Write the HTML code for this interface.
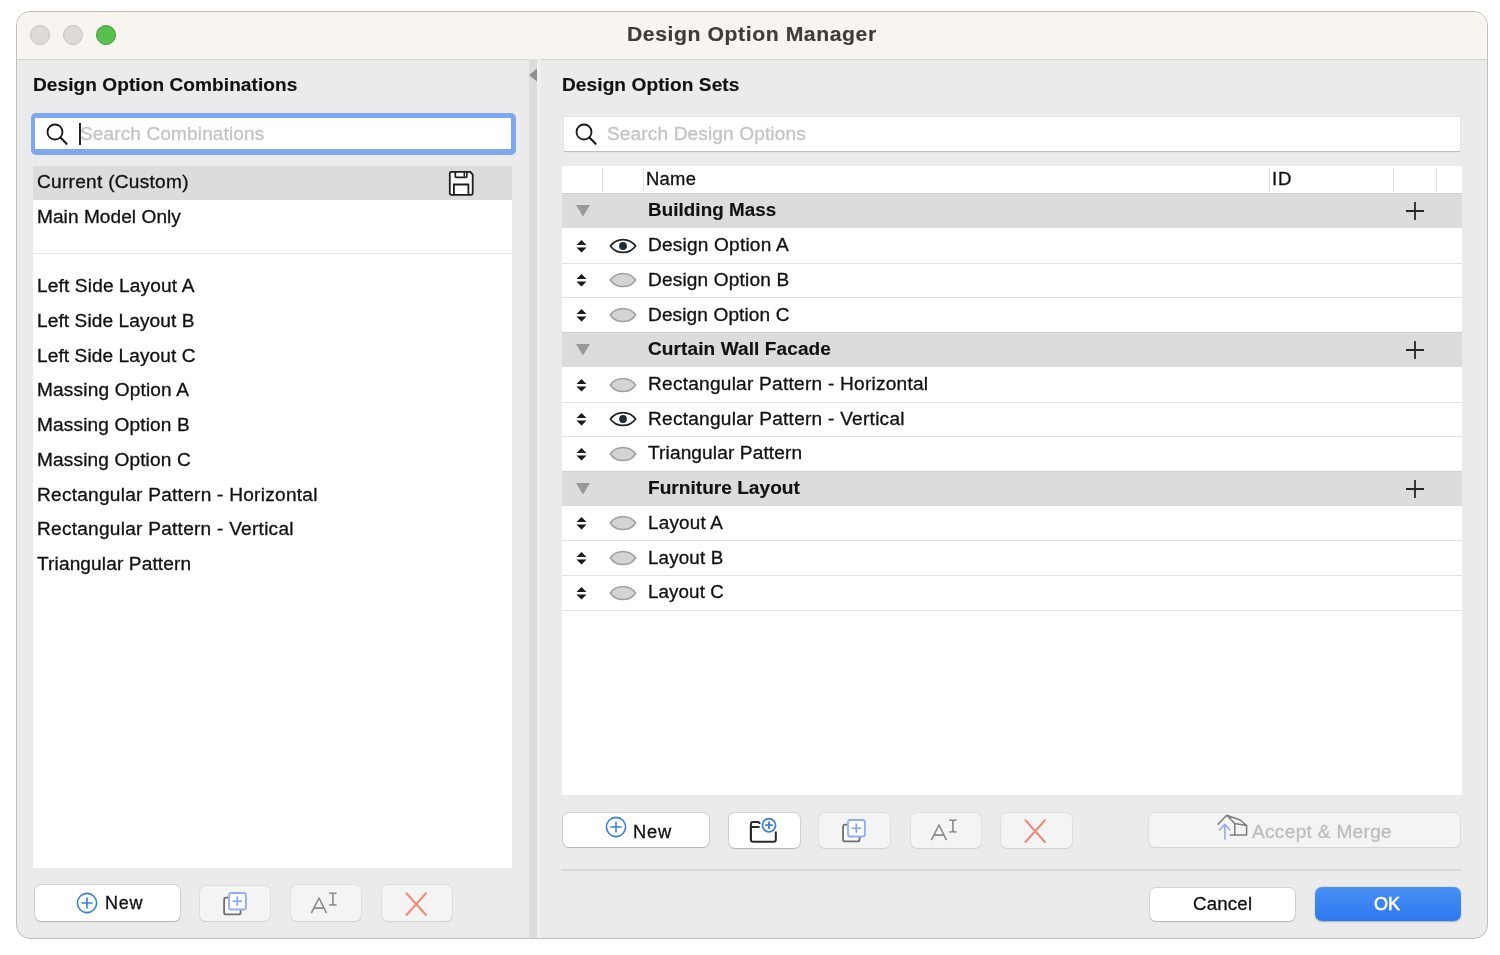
<!DOCTYPE html><html><head><meta charset="utf-8"><style>
*{margin:0;padding:0;box-sizing:border-box}
html,body{width:1500px;height:955px;background:#fff;overflow:hidden;font-family:"Liberation Sans", sans-serif}
.a{position:absolute}
.t{position:absolute;white-space:pre;line-height:1;color:#111;will-change:transform;-webkit-text-stroke:0.3px currentColor}
.t.b{-webkit-text-stroke:0.15px currentColor}
.win{left:15.8px;top:10.8px;width:1472.2px;height:928.4px;border:1.2px solid #bfbfbf;border-radius:14px;background:#ebebeb;overflow:hidden}
.btn{position:absolute;border-radius:6px;background:#fff;box-shadow:0 0 0 1px rgba(0,0,0,0.1),0 1px 1px rgba(0,0,0,0.14)}
.btn.dis{background:#f4f4f4;box-shadow:0 0 0 1px rgba(0,0,0,0.045),0 1px 1.5px rgba(0,0,0,0.07)}
</style></head><body><div class="a win"></div>
<div class="a" style="left:17px;top:12px;width:1470px;height:47.5px;background:#f8f4ef;border-radius:13px 13px 0 0;border-bottom:1.5px solid #d3d1cc"></div>
<div class="a" style="left:30px;top:25px;width:20px;height:20px;border-radius:50%;background:#dedad5;border:1px solid #c9c4bf"></div>
<div class="a" style="left:63px;top:25px;width:20px;height:20px;border-radius:50%;background:#dedad5;border:1px solid #c9c4bf"></div>
<div class="a" style="left:96px;top:25px;width:20px;height:20px;border-radius:50%;background:#58c14e;border:1px solid #46a23d"></div>
<div class="t b" style="left:626.70px;top:24.00px;font-size:20px;letter-spacing:0.531px;font-weight:bold;color:#3f3b37;transform:scaleX(1.0600);transform-origin:0 0;">Design Option Manager</div>
<div class="a" style="left:529px;top:59px;width:8px;height:879px;background:#dcdcdc"></div>
<div class="a" style="left:537px;top:59px;width:4px;height:879px;background:#efefef"></div>
<svg class="a" style="left:528px;top:66px" width="10" height="18"><path d="M1 9 L9 2.5 L9 15.5 Z" fill="#909090"/></svg>
<div class="t b" style="left:33.00px;top:76.00px;font-size:18px;letter-spacing:0.056px;font-weight:bold;color:#111;transform:scaleX(1.0600);transform-origin:0 0;">Design Option Combinations</div>
<div class="a" style="left:30.5px;top:112.5px;width:485px;height:42px;border-radius:5px;background:#7ea7ee"></div>
<div class="a" style="left:35.3px;top:118.2px;width:475.4px;height:31.2px;background:#fff"></div>
<svg class="a" style="left:42.7px;top:120.30000000000001px" width="26" height="26" viewBox="-12 -12 26 26"><circle cx="0" cy="0" r="7.5" fill="none" stroke="#1a1a1a" stroke-width="1.8"/><path d="M5.4 5.6 L11.6 11.8" stroke="#1a1a1a" stroke-width="2.1" stroke-linecap="round"/></svg>
<div class="a" style="left:79px;top:123px;width:2px;height:22px;background:#222"></div>
<div class="t" style="left:79.57px;top:125.00px;font-size:18px;letter-spacing:0.119px;font-weight:normal;color:#c4c4c4;transform:scaleX(1.0576);transform-origin:0 0;">Search Combinations</div>
<div class="a" style="left:33px;top:166px;width:479px;height:702px;background:#fff"></div>
<div class="a" style="left:33px;top:166px;width:479px;height:33.6px;background:#dcdcdc"></div>
<div class="a" style="left:33px;top:253px;width:479px;height:1px;background:#e4e4e4"></div>
<svg class="a" style="left:440px;top:166px" width="42" height="36" viewBox="440 166 42 36"><path d="M449.8 173 Q449.8 171.8 451.5 171.8 H470.3 L472.7 174.6 V193 Q472.7 194.9 470.8 194.9 H451.7 Q449.8 194.9 449.8 193 Z" fill="#fff" stroke="#1e1e1e" stroke-width="1.8" stroke-linejoin="round"/><path d="M455.3 171.8 V176.5 Q455.3 177.4 456.2 177.4 H465.9 Q466.8 177.4 466.8 176.5 V171.8" fill="none" stroke="#1e1e1e" stroke-width="1.7"/><path d="M464.3 172.5 V176.8" stroke="#1e1e1e" stroke-width="1.5"/><path d="M453.9 194.9 V184.5 H468.4 V194.9" fill="none" stroke="#1e1e1e" stroke-width="1.8"/></svg>
<div class="t" style="left:36.50px;top:173.00px;font-size:18px;letter-spacing:0.260px;font-weight:normal;color:#111;transform:scaleX(1.0600);transform-origin:0 0;">Current (Custom)</div>
<div class="t" style="left:36.50px;top:208.00px;font-size:18px;letter-spacing:0.051px;font-weight:normal;color:#111;transform:scaleX(1.0600);transform-origin:0 0;">Main Model Only</div>
<div class="t" style="left:36.50px;top:277.00px;font-size:18px;letter-spacing:0.140px;font-weight:normal;color:#111;transform:scaleX(1.0600);transform-origin:0 0;">Left Side Layout A</div>
<div class="t" style="left:36.50px;top:312.00px;font-size:18px;letter-spacing:0.089px;font-weight:normal;color:#111;transform:scaleX(1.0600);transform-origin:0 0;">Left Side Layout B</div>
<div class="t" style="left:36.50px;top:347.00px;font-size:18px;letter-spacing:0.083px;font-weight:normal;color:#111;transform:scaleX(1.0600);transform-origin:0 0;">Left Side Layout C</div>
<div class="t" style="left:36.50px;top:381.00px;font-size:18px;letter-spacing:0.153px;font-weight:normal;color:#111;transform:scaleX(1.0600);transform-origin:0 0;">Massing Option A</div>
<div class="t" style="left:36.50px;top:416.00px;font-size:18px;letter-spacing:0.135px;font-weight:normal;color:#111;transform:scaleX(1.0600);transform-origin:0 0;">Massing Option B</div>
<div class="t" style="left:36.50px;top:451.00px;font-size:18px;letter-spacing:0.129px;font-weight:normal;color:#111;transform:scaleX(1.0600);transform-origin:0 0;">Massing Option C</div>
<div class="t" style="left:36.50px;top:486.00px;font-size:18px;letter-spacing:0.239px;font-weight:normal;color:#111;transform:scaleX(1.0600);transform-origin:0 0;">Rectangular Pattern - Horizontal</div>
<div class="t" style="left:36.50px;top:520.00px;font-size:18px;letter-spacing:0.237px;font-weight:normal;color:#111;transform:scaleX(1.0600);transform-origin:0 0;">Rectangular Pattern - Vertical</div>
<div class="t" style="left:36.71px;top:555.00px;font-size:18px;letter-spacing:0.114px;font-weight:normal;color:#111;transform:scaleX(1.0600);transform-origin:0 0;">Triangular Pattern</div>
<div class="btn" style="left:35px;top:885px;width:145px;height:35.5px"></div>
<svg class="a" style="left:75px;top:890.6px" width="24" height="24" viewBox="0 0 24 24"><circle cx="12" cy="12" r="9.6" fill="none" stroke="#3a7de0" stroke-width="1.6"/><path d="M12 6.4 V17.6 M6.4 12 H17.6" stroke="#3a7de0" stroke-width="1.6"/></svg>
<div class="t" style="left:105.30px;top:894.00px;font-size:18px;letter-spacing:0.698px;font-weight:normal;color:#111;">New</div>
<div class="btn dis" style="left:200px;top:886px;width:70px;height:34.5px"></div>
<svg class="a" style="left:220.9px;top:888.9px" width="32" height="30" viewBox="-8 -4 32 30"><path d="M0 4.7 H-2.9 Q-4.9 4.7 -4.9 6.7 V19.4 Q-4.9 21.4 -2.9 21.4 H9.6 Q11.6 21.4 11.6 19.4 V16.5" fill="#fcfcfc" stroke="#6f6f6f" stroke-width="1.8"/><rect x="0" y="0" width="16.9" height="16.5" rx="2" fill="#fbfcff" stroke="#90aef2" stroke-width="1.8"/><path d="M8.3 3.6 V12.8 M3.6 8.2 H13" stroke="#7fa3f0" stroke-width="1.6"/></svg>
<div class="btn dis" style="left:291px;top:885px;width:70px;height:35.5px"></div>
<svg class="a" style="left:309.1px;top:891.6px" width="30" height="24" viewBox="-10 -6 30 24"><path d="M-7.7 15.2 L0 0 L7.5 15.2 M-5.4 10.1 H5.7" fill="none" stroke="#8a8a8a" stroke-width="1.6" stroke-linejoin="round"/><path d="M13.9 -4.9 V7" stroke="#8a8a8a" stroke-width="1.6"/><path d="M10.2 -4.9 Q13.9 -4.4 17.6 -4.9 M10.2 7 Q13.9 6.5 17.6 7" fill="none" stroke="#8a8a8a" stroke-width="1.5"/></svg>
<div class="btn dis" style="left:382px;top:885px;width:70px;height:35.5px"></div>
<svg class="a" style="left:403.4px;top:889.6px" width="26" height="28" viewBox="-3 -3 26 28"><path d="M0 -0.2 L20.4 22.6 M20.4 -0.2 L0 22.6" stroke="#ea8f7c" stroke-width="2.2" stroke-linecap="butt"/></svg>
<div class="t b" style="left:562.00px;top:76.00px;font-size:18px;letter-spacing:0.077px;font-weight:bold;color:#111;transform:scaleX(1.0600);transform-origin:0 0;">Design Option Sets</div>
<div class="a" style="left:563.7px;top:117.2px;width:896.6px;height:34.6px;background:#fff;border-bottom:1.6px solid #c0c0c0;box-shadow:0 0 0 0.5px rgba(0,0,0,0.06)"></div>
<svg class="a" style="left:571.5px;top:120.19999999999999px" width="26" height="26" viewBox="-12 -12 26 26"><circle cx="0" cy="0" r="7.5" fill="none" stroke="#1a1a1a" stroke-width="1.8"/><path d="M5.4 5.6 L11.6 11.8" stroke="#1a1a1a" stroke-width="2.1" stroke-linecap="round"/></svg>
<div class="t" style="left:607.33px;top:125.00px;font-size:18px;letter-spacing:0.120px;font-weight:normal;color:#c4c4c4;transform:scaleX(1.0600);transform-origin:0 0;">Search Design Options</div>
<div class="a" style="left:562px;top:165.8px;width:899.5px;height:629.4px;background:#fff"></div>
<div class="a" style="left:602px;top:167.5px;width:1.2px;height:24px;background:#e0e0e0"></div>
<div class="a" style="left:643px;top:167.5px;width:1.2px;height:24px;background:#e0e0e0"></div>
<div class="a" style="left:1269px;top:167.5px;width:1.2px;height:24px;background:#e0e0e0"></div>
<div class="a" style="left:1393px;top:167.5px;width:1.2px;height:24px;background:#e0e0e0"></div>
<div class="a" style="left:1436px;top:167.5px;width:1.2px;height:24px;background:#e0e0e0"></div>
<div class="t" style="left:646.00px;top:170.00px;font-size:18px;letter-spacing:0.269px;font-weight:normal;color:#111;transform:scaleX(1.0212);transform-origin:0 0;">Name</div>
<div class="t" style="left:1271.50px;top:170.00px;font-size:18px;letter-spacing:0.828px;font-weight:normal;color:#111;transform:scaleX(1.0294);transform-origin:0 0;">ID</div>
<div class="a" style="left:562px;top:193px;width:899.5px;height:35px;background:#dcdcdc;border-top:1.5px solid #d0d0d0"></div>
<svg class="a" style="left:575px;top:204.00px" width="16" height="13" viewBox="0 0 16 13"><path d="M1 1 H15 L8.5 11.8 Q8 12.4 7.5 11.8 Z" fill="#999"/></svg>
<div class="t b" style="left:647.70px;top:201.00px;font-size:18px;letter-spacing:0.083px;font-weight:bold;color:#111;transform:scaleX(1.0430);transform-origin:0 0;">Building Mass</div>
<svg class="a" style="left:1405px;top:201.00px" width="20" height="20" viewBox="0 0 20 20"><path d="M10 1 V19 M1 10 H19" stroke="#262626" stroke-width="1.8"/></svg>
<div class="a" style="left:562px;top:263px;width:899.5px;height:1px;background:#e2e2e2"></div>
<svg class="a" style="left:575px;top:238.70px" width="13" height="14" viewBox="0 0 13 14"><path d="M1.5 6 L6.5 1 L11.5 6 Z M1.5 8.5 L6.5 13.5 L11.5 8.5 Z" fill="#1a1a1a"/></svg>
<svg class="a" style="left:608px;top:236.70px" width="30" height="18" viewBox="0 0 30 18"><path d="M2.4 9 A15.5 15.5 0 0 1 27.6 9 A15.5 15.5 0 0 1 2.4 9 Z" fill="#fff" stroke="#222" stroke-width="1.7" stroke-linejoin="round"/><circle cx="15" cy="9" r="3.9" fill="#1f2a33"/></svg>
<div class="t" style="left:647.70px;top:236.00px;font-size:18px;letter-spacing:0.185px;font-weight:normal;color:#111;transform:scaleX(1.0600);transform-origin:0 0;">Design Option A</div>
<div class="a" style="left:562px;top:297px;width:899.5px;height:1px;background:#e2e2e2"></div>
<svg class="a" style="left:575px;top:273.40px" width="13" height="14" viewBox="0 0 13 14"><path d="M1.5 6 L6.5 1 L11.5 6 Z M1.5 8.5 L6.5 13.5 L11.5 8.5 Z" fill="#1a1a1a"/></svg>
<svg class="a" style="left:608px;top:271.40px" width="30" height="18" viewBox="0 0 30 18"><path d="M2.3 9 A15.5 15.5 0 0 1 27.7 9 A15.5 15.5 0 0 1 2.3 9 Z" fill="#d4d4d4" stroke="#a0a0a0" stroke-width="1.5" stroke-linejoin="round"/></svg>
<div class="t" style="left:647.70px;top:271.00px;font-size:18px;letter-spacing:0.146px;font-weight:normal;color:#111;transform:scaleX(1.0600);transform-origin:0 0;">Design Option B</div>
<div class="a" style="left:562px;top:332px;width:899.5px;height:1px;background:#e2e2e2"></div>
<svg class="a" style="left:575px;top:308.10px" width="13" height="14" viewBox="0 0 13 14"><path d="M1.5 6 L6.5 1 L11.5 6 Z M1.5 8.5 L6.5 13.5 L11.5 8.5 Z" fill="#1a1a1a"/></svg>
<svg class="a" style="left:608px;top:306.10px" width="30" height="18" viewBox="0 0 30 18"><path d="M2.3 9 A15.5 15.5 0 0 1 27.7 9 A15.5 15.5 0 0 1 2.3 9 Z" fill="#d4d4d4" stroke="#a0a0a0" stroke-width="1.5" stroke-linejoin="round"/></svg>
<div class="t" style="left:647.70px;top:306.00px;font-size:18px;letter-spacing:0.102px;font-weight:normal;color:#111;transform:scaleX(1.0600);transform-origin:0 0;">Design Option C</div>
<div class="a" style="left:562px;top:332px;width:899.5px;height:35px;background:#dcdcdc;border-top:1.5px solid #d0d0d0"></div>
<svg class="a" style="left:575px;top:342.80px" width="16" height="13" viewBox="0 0 16 13"><path d="M1 1 H15 L8.5 11.8 Q8 12.4 7.5 11.8 Z" fill="#999"/></svg>
<div class="t b" style="left:647.87px;top:340.00px;font-size:18px;letter-spacing:0.087px;font-weight:bold;color:#111;transform:scaleX(1.0574);transform-origin:0 0;">Curtain Wall Facade</div>
<svg class="a" style="left:1405px;top:339.80px" width="20" height="20" viewBox="0 0 20 20"><path d="M10 1 V19 M1 10 H19" stroke="#262626" stroke-width="1.8"/></svg>
<div class="a" style="left:562px;top:402px;width:899.5px;height:1px;background:#e2e2e2"></div>
<svg class="a" style="left:575px;top:377.50px" width="13" height="14" viewBox="0 0 13 14"><path d="M1.5 6 L6.5 1 L11.5 6 Z M1.5 8.5 L6.5 13.5 L11.5 8.5 Z" fill="#1a1a1a"/></svg>
<svg class="a" style="left:608px;top:375.50px" width="30" height="18" viewBox="0 0 30 18"><path d="M2.3 9 A15.5 15.5 0 0 1 27.7 9 A15.5 15.5 0 0 1 2.3 9 Z" fill="#d4d4d4" stroke="#a0a0a0" stroke-width="1.5" stroke-linejoin="round"/></svg>
<div class="t" style="left:647.70px;top:375.00px;font-size:18px;letter-spacing:0.230px;font-weight:normal;color:#111;transform:scaleX(1.0600);transform-origin:0 0;">Rectangular Pattern - Horizontal</div>
<div class="a" style="left:562px;top:436px;width:899.5px;height:1px;background:#e2e2e2"></div>
<svg class="a" style="left:575px;top:412.20px" width="13" height="14" viewBox="0 0 13 14"><path d="M1.5 6 L6.5 1 L11.5 6 Z M1.5 8.5 L6.5 13.5 L11.5 8.5 Z" fill="#1a1a1a"/></svg>
<svg class="a" style="left:608px;top:410.20px" width="30" height="18" viewBox="0 0 30 18"><path d="M2.4 9 A15.5 15.5 0 0 1 27.6 9 A15.5 15.5 0 0 1 2.4 9 Z" fill="#fff" stroke="#222" stroke-width="1.7" stroke-linejoin="round"/><circle cx="15" cy="9" r="3.9" fill="#1f2a33"/></svg>
<div class="t" style="left:647.70px;top:410.00px;font-size:18px;letter-spacing:0.237px;font-weight:normal;color:#111;transform:scaleX(1.0600);transform-origin:0 0;">Rectangular Pattern - Vertical</div>
<div class="a" style="left:562px;top:471px;width:899.5px;height:1px;background:#e2e2e2"></div>
<svg class="a" style="left:575px;top:446.90px" width="13" height="14" viewBox="0 0 13 14"><path d="M1.5 6 L6.5 1 L11.5 6 Z M1.5 8.5 L6.5 13.5 L11.5 8.5 Z" fill="#1a1a1a"/></svg>
<svg class="a" style="left:608px;top:444.90px" width="30" height="18" viewBox="0 0 30 18"><path d="M2.3 9 A15.5 15.5 0 0 1 27.7 9 A15.5 15.5 0 0 1 2.3 9 Z" fill="#d4d4d4" stroke="#a0a0a0" stroke-width="1.5" stroke-linejoin="round"/></svg>
<div class="t" style="left:647.91px;top:444.00px;font-size:18px;letter-spacing:0.114px;font-weight:normal;color:#111;transform:scaleX(1.0600);transform-origin:0 0;">Triangular Pattern</div>
<div class="a" style="left:562px;top:471px;width:899.5px;height:35px;background:#dcdcdc;border-top:1.5px solid #d0d0d0"></div>
<svg class="a" style="left:575px;top:481.60px" width="16" height="13" viewBox="0 0 16 13"><path d="M1 1 H15 L8.5 11.8 Q8 12.4 7.5 11.8 Z" fill="#999"/></svg>
<div class="t b" style="left:647.70px;top:479.00px;font-size:18px;letter-spacing:0.023px;font-weight:bold;color:#111;transform:scaleX(1.0591);transform-origin:0 0;">Furniture Layout</div>
<svg class="a" style="left:1405px;top:478.60px" width="20" height="20" viewBox="0 0 20 20"><path d="M10 1 V19 M1 10 H19" stroke="#262626" stroke-width="1.8"/></svg>
<div class="a" style="left:562px;top:540px;width:899.5px;height:1px;background:#e2e2e2"></div>
<svg class="a" style="left:575px;top:516.30px" width="13" height="14" viewBox="0 0 13 14"><path d="M1.5 6 L6.5 1 L11.5 6 Z M1.5 8.5 L6.5 13.5 L11.5 8.5 Z" fill="#1a1a1a"/></svg>
<svg class="a" style="left:608px;top:514.30px" width="30" height="18" viewBox="0 0 30 18"><path d="M2.3 9 A15.5 15.5 0 0 1 27.7 9 A15.5 15.5 0 0 1 2.3 9 Z" fill="#d4d4d4" stroke="#a0a0a0" stroke-width="1.5" stroke-linejoin="round"/></svg>
<div class="t" style="left:647.70px;top:514.00px;font-size:18px;letter-spacing:0.209px;font-weight:normal;color:#111;transform:scaleX(1.0479);transform-origin:0 0;">Layout A</div>
<div class="a" style="left:562px;top:575px;width:899.5px;height:1px;background:#e2e2e2"></div>
<svg class="a" style="left:575px;top:551.00px" width="13" height="14" viewBox="0 0 13 14"><path d="M1.5 6 L6.5 1 L11.5 6 Z M1.5 8.5 L6.5 13.5 L11.5 8.5 Z" fill="#1a1a1a"/></svg>
<svg class="a" style="left:608px;top:549.00px" width="30" height="18" viewBox="0 0 30 18"><path d="M2.3 9 A15.5 15.5 0 0 1 27.7 9 A15.5 15.5 0 0 1 2.3 9 Z" fill="#d4d4d4" stroke="#a0a0a0" stroke-width="1.5" stroke-linejoin="round"/></svg>
<div class="t" style="left:647.70px;top:549.00px;font-size:18px;letter-spacing:0.151px;font-weight:normal;color:#111;transform:scaleX(1.0422);transform-origin:0 0;">Layout B</div>
<div class="a" style="left:562px;top:610px;width:899.5px;height:1px;background:#e2e2e2"></div>
<svg class="a" style="left:575px;top:585.70px" width="13" height="14" viewBox="0 0 13 14"><path d="M1.5 6 L6.5 1 L11.5 6 Z M1.5 8.5 L6.5 13.5 L11.5 8.5 Z" fill="#1a1a1a"/></svg>
<svg class="a" style="left:608px;top:583.70px" width="30" height="18" viewBox="0 0 30 18"><path d="M2.3 9 A15.5 15.5 0 0 1 27.7 9 A15.5 15.5 0 0 1 2.3 9 Z" fill="#d4d4d4" stroke="#a0a0a0" stroke-width="1.5" stroke-linejoin="round"/></svg>
<div class="t" style="left:647.70px;top:583.00px;font-size:18px;letter-spacing:0.111px;font-weight:normal;color:#111;transform:scaleX(1.0416);transform-origin:0 0;">Layout C</div>
<div class="btn" style="left:563px;top:813px;width:145.5px;height:33.5px"></div>
<svg class="a" style="left:603.5px;top:814.8px" width="24" height="24" viewBox="0 0 24 24"><circle cx="12" cy="12" r="9.6" fill="none" stroke="#3a7de0" stroke-width="1.6"/><path d="M12 6.4 V17.6 M6.4 12 H17.6" stroke="#3a7de0" stroke-width="1.6"/></svg>
<div class="t" style="left:633.00px;top:822.60px;font-size:18px;letter-spacing:0.762px;font-weight:normal;color:#111;transform:scaleX(1.0164);transform-origin:0 0;">New</div>
<div class="btn" style="left:729px;top:812.5px;width:70.5px;height:35.5px"></div>
<svg class="a" style="left:740px;top:812px" width="42" height="36" viewBox="740 812 42 36"><path d="M750.9 840 V824 Q750.9 822 752.9 822 H757.6 Q759.6 822 759.6 824 M750.9 826.9 H759.6" fill="none" stroke="#262b2f" stroke-width="2" stroke-linejoin="round"/><path d="M750.9 826 V839.8 Q750.9 841.8 752.9 841.8 H773.8 Q775.8 841.8 775.8 839.8 V831.6" fill="none" stroke="#262b2f" stroke-width="2"/><circle cx="769" cy="825.2" r="6.6" fill="#fff" stroke="#3a7de0" stroke-width="1.7"/><path d="M769 821.4 V829 M765.2 825.2 H772.8" stroke="#3a7de0" stroke-width="1.8"/></svg>
<div class="btn dis" style="left:819px;top:813px;width:71px;height:35px"></div>
<svg class="a" style="left:840px;top:815.6px" width="32" height="30" viewBox="-8 -4 32 30"><path d="M0 4.7 H-2.9 Q-4.9 4.7 -4.9 6.7 V19.4 Q-4.9 21.4 -2.9 21.4 H9.6 Q11.6 21.4 11.6 19.4 V16.5" fill="#fcfcfc" stroke="#6f6f6f" stroke-width="1.8"/><rect x="0" y="0" width="16.9" height="16.5" rx="2" fill="#fbfcff" stroke="#90aef2" stroke-width="1.8"/><path d="M8.3 3.6 V12.8 M3.6 8.2 H13" stroke="#7fa3f0" stroke-width="1.6"/></svg>
<div class="btn dis" style="left:910.5px;top:813px;width:70.5px;height:35px"></div>
<svg class="a" style="left:928.6px;top:818.6px" width="30" height="24" viewBox="-10 -6 30 24"><path d="M-7.7 15.2 L0 0 L7.5 15.2 M-5.4 10.1 H5.7" fill="none" stroke="#8a8a8a" stroke-width="1.6" stroke-linejoin="round"/><path d="M13.9 -4.9 V7" stroke="#8a8a8a" stroke-width="1.6"/><path d="M10.2 -4.9 Q13.9 -4.4 17.6 -4.9 M10.2 7 Q13.9 6.5 17.6 7" fill="none" stroke="#8a8a8a" stroke-width="1.5"/></svg>
<div class="btn dis" style="left:1001px;top:813px;width:71px;height:35px"></div>
<svg class="a" style="left:1022.4000000000001px;top:816.6px" width="26" height="28" viewBox="-3 -3 26 28"><path d="M0 -0.2 L20.4 22.6 M20.4 -0.2 L0 22.6" stroke="#ea8f7c" stroke-width="2.2" stroke-linecap="butt"/></svg>
<div class="btn dis" style="left:1149px;top:813px;width:310.5px;height:33.5px"></div>
<svg class="a" style="left:1210px;top:808px" width="50" height="38" viewBox="1210 808 50 38"><path d="M1218 824.3 L1226.7 815.2 L1240.2 820 L1246.6 825.5 L1234.8 823.5 L1226.7 815.2" fill="none" stroke="#7c7c7c" stroke-width="1.5" stroke-linejoin="round" stroke-linecap="round"/><path d="M1234.8 823.5 V835 M1246.6 825.5 V835 H1230.3" fill="none" stroke="#7c7c7c" stroke-width="1.5" stroke-linejoin="round" stroke-linecap="round"/><path d="M1224.9 839.8 V824.6 M1219.1 830.3 L1224.9 824.4 L1230.3 830.3" fill="none" stroke="#8eaef2" stroke-width="1.6"/></svg>
<div class="t" style="left:1251.85px;top:823.00px;font-size:18px;letter-spacing:0.287px;font-weight:normal;color:#bdbdbd;transform:scaleX(1.0600);transform-origin:0 0;">Accept &amp; Merge</div>
<div class="a" style="left:561px;top:869px;width:900px;height:1.5px;background:#d8d8d8"></div>
<div class="btn" style="left:1150px;top:887.5px;width:145px;height:33px"></div>
<div class="t" style="left:1193.00px;top:895.00px;font-size:18px;letter-spacing:0.193px;font-weight:normal;color:#111;transform:scaleX(1.0358);transform-origin:0 0;">Cancel</div>
<div class="a" style="left:1315px;top:887.3px;width:145.5px;height:33.3px;border-radius:7px;background:linear-gradient(#4a90f6,#2c78ee);box-shadow:0 0.5px 1.5px rgba(0,0,0,0.25)"></div>
<div class="t" style="left:1374.26px;top:895.00px;font-size:18px;letter-spacing:0.027px;font-weight:normal;color:#fff;-webkit-text-stroke:0.6px #fff">OK</div></body></html>
